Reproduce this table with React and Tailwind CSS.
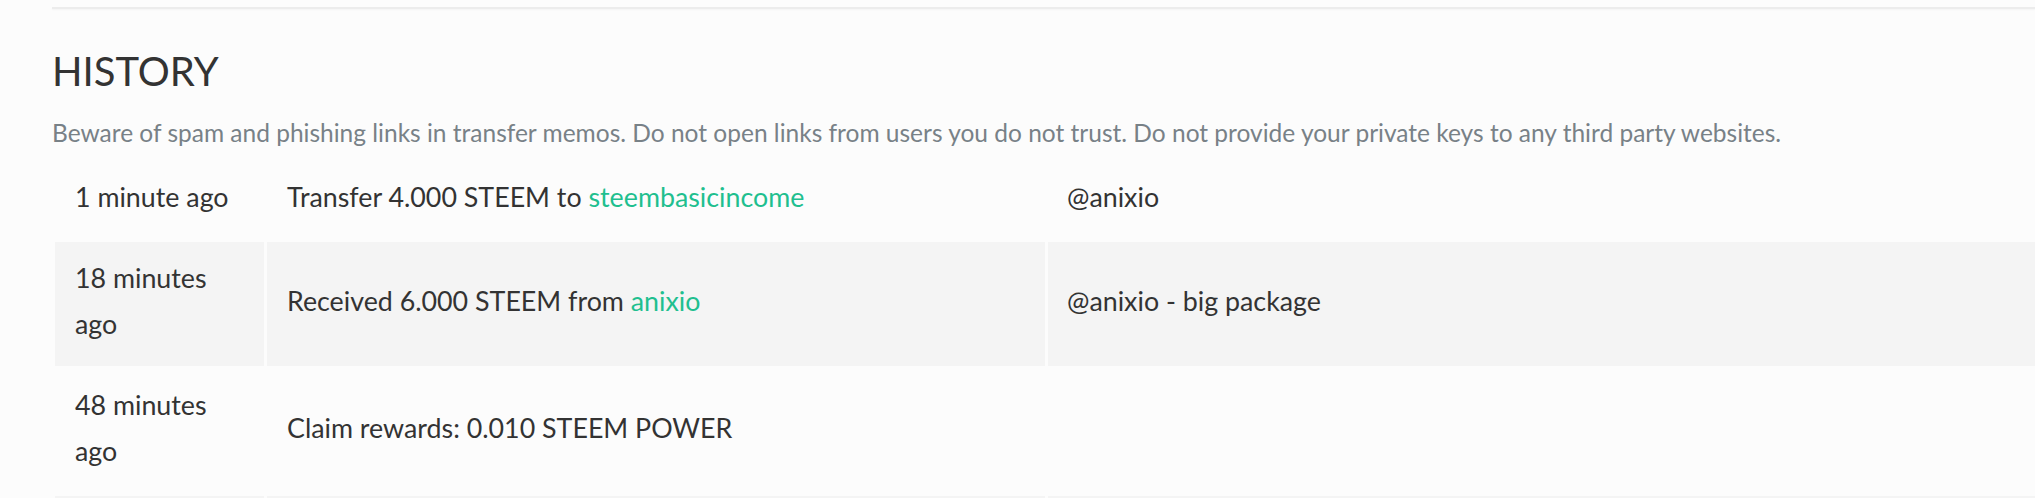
export default function App() {
  const rows = [
    {
      time: "1 minute ago",
      desc: (
        <>
          Transfer 4.000 STEEM to{" "}
          <a className="text-[#1fbf8f]">steembasicincome</a>
        </>
      ),
      memo: "@anixio",
      shade: false,
    },
    {
      time: "18 minutes ago",
      desc: (
        <>
          Received 6.000 STEEM from <a className="text-[#1fbf8f]">anixio</a>
        </>
      ),
      memo: "@anixio - big package",
      shade: true,
    },
    {
      time: "48 minutes ago",
      desc: <>Claim rewards: 0.010 STEEM POWER</>,
      memo: "",
      shade: false,
    },
  ];

  return (
    <div
      className="w-[2035px] h-[498px] overflow-hidden bg-[#fcfcfc] pl-[52px] pt-[7px]"
      style={{ fontFamily: "Lato, 'Open Sans', sans-serif" }}
    >
      <div className="h-[2px] bg-[#ececec] shadow-[0_1px_2px_rgba(0,0,0,0.04)]" />
      <h2 className="mt-[38px] text-[40px] leading-[48px] font-normal text-[#333333]">
        HISTORY
      </h2>
      <p className="mt-[20px] text-[24.5px] leading-[36px] text-[#788187] whitespace-nowrap">
        Beware of spam and phishing links in transfer memos. Do not open links
        from users you do not trust. Do not provide your private keys to any
        third party websites.
      </p>
      <table className="mt-[7px] w-[2200px] table-fixed border-separate border-spacing-[3px] text-[26.8px] leading-[46px] text-[#333333]">
        <colgroup>
          <col className="w-[209px]" />
          <col className="w-[778px]" />
          <col />
        </colgroup>
        <tbody>
          {rows.map((r, i) => (
            <tr key={i} className={r.shade ? "bg-[#f4f4f4]" : ""}>
              <td className="pl-[20px] pr-[20px] pt-[13px] pb-[19px] align-middle">
                {r.time}
              </td>
              <td className="pl-[20px] pr-[20px] pt-[13px] pb-[19px] align-middle">
                {r.desc}
              </td>
              <td className="pl-[19px] pr-[20px] pt-[13px] pb-[19px] align-middle">
                {r.memo}
              </td>
            </tr>
          ))}
          <tr className="bg-[#f4f4f4]">
            <td className="h-[78px]" />
            <td className="h-[78px]" />
            <td className="h-[78px]" />
          </tr>
        </tbody>
      </table>
    </div>
  );
}
